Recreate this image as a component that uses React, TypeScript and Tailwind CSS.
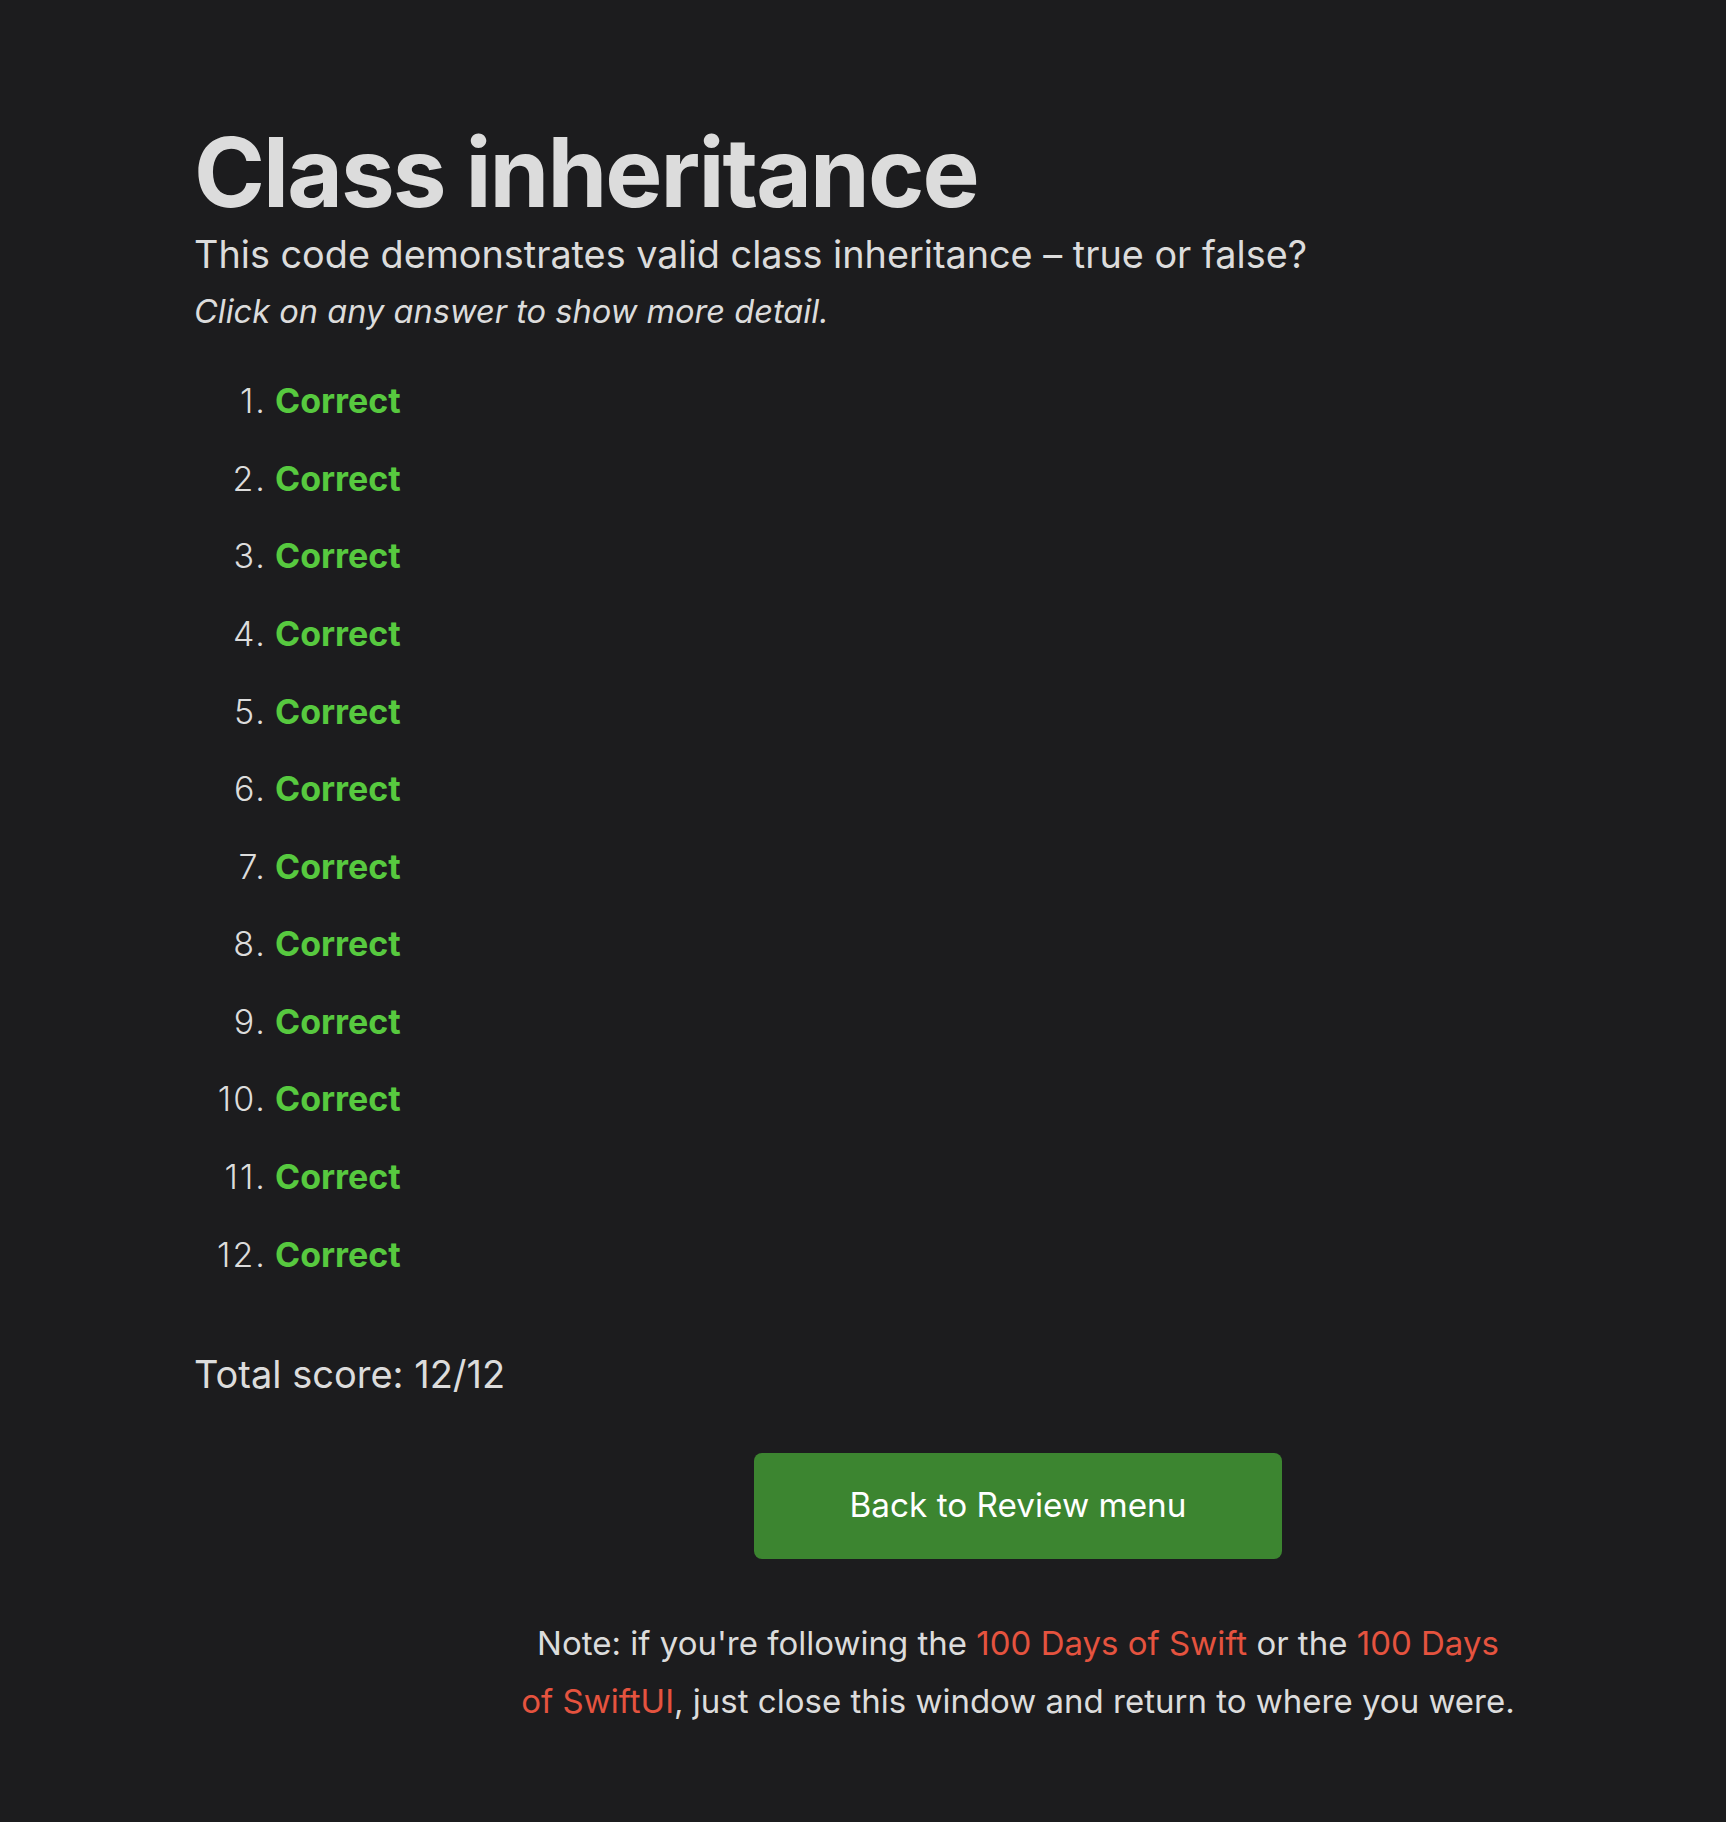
import React from 'react';

const answers = Array.from({ length: 12 }, (_, i) => i + 1);

export default function App() {
  return (
    <div className="min-h-[1822px] w-full bg-[#1c1c1e] text-[#dcdcdc] font-['Inter',sans-serif]">
      <div className="pl-[194px] pt-[120px]">
        <h1 className="text-[96px] font-bold leading-[1.1] tracking-[-0.02em]">Class inheritance</h1>
        <p className="mt-[2px] text-[37.8px] leading-[1.4]">
          This code demonstrates valid class inheritance – true or false?
        </p>
        <p className="mt-[8px] text-[32.6px] italic leading-[1.4]">Click on any answer to show more detail.</p>

        <ol className="mt-[47px]">
          {answers.map((n) => (
            <li key={n} className="mb-[36.8px] flex items-baseline text-[34px] leading-[1.2]">
              <span className="w-[73px] text-right text-[34px] font-light tracking-[0.06em]">{n}.</span>
              <span className="ml-[8px] font-bold text-[#57c93f] cursor-pointer">Correct</span>
            </li>
          ))}
        </ol>

        <p className="mt-[71px] text-[38px]">Total score: 12/12</p>
      </div>

      <div className="pl-[310px] mt-[50px] flex flex-col items-center">
        <button className="w-[528px] h-[106px] rounded-[8px] bg-[#3c8530] text-white text-[33.3px]">
          Back to Review menu
        </button>
        <p className="mt-[55px] w-[995px] text-center text-[33px] leading-[58px]">
          Note: if you're following the <span className="text-[#e5533f]">100 Days of Swift</span> or the{' '}
          <span className="text-[#e5533f]">100 Days of SwiftUI</span>, just close this window and return to where you were.
        </p>
      </div>
    </div>
  );
}
